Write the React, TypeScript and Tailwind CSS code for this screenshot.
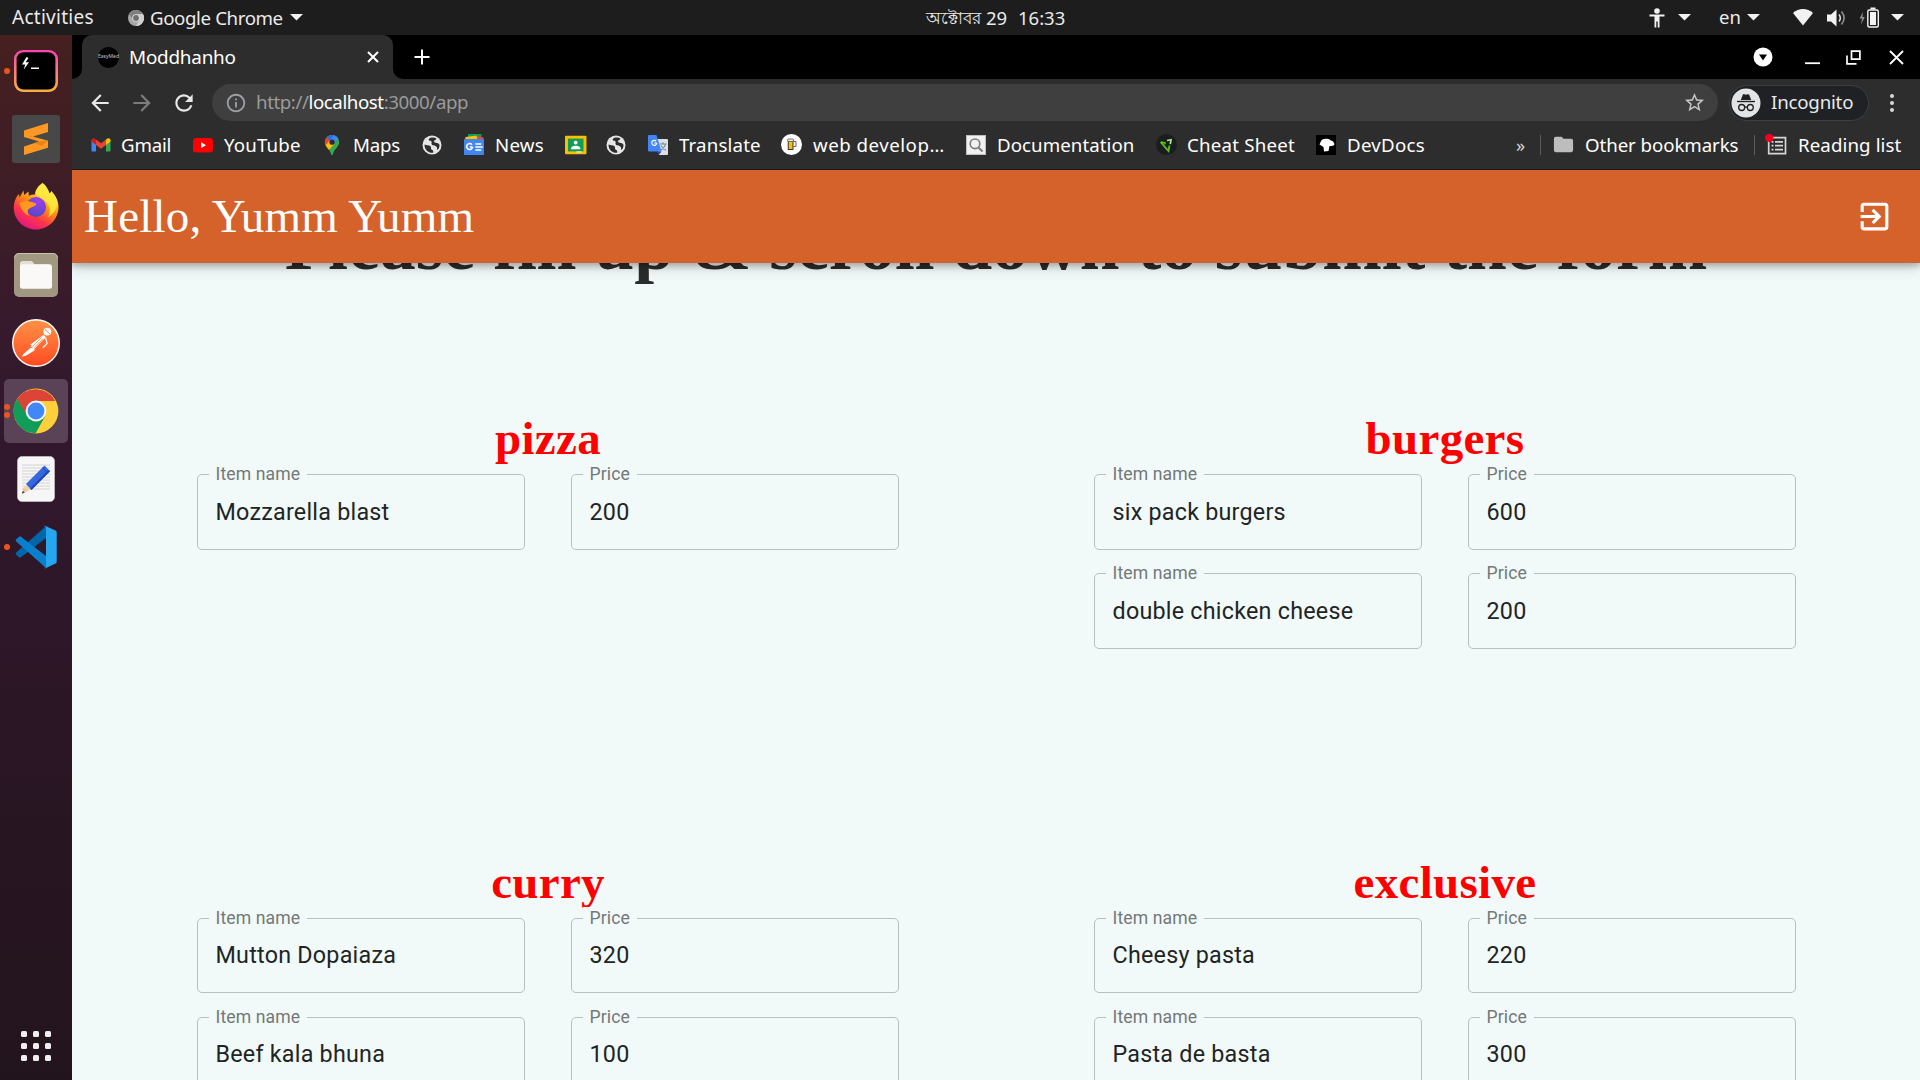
import type { ReactNode } from "react";
import {
  MdArrowBack,
  MdArrowForward,
  MdFolder,
  MdInfoOutline,
  MdRefresh,
  MdStarBorder,
} from "react-icons/md";

/* ---------- system top bar ---------- */

function Caret({ className }: { className: string }) {
  return (
    <svg className={`shrink-0 ${className}`} width="13" height="7" viewBox="0 0 13 7">
      <path d="M0 0h13L6.5 6.6z" fill="#f2f2f2" />
    </svg>
  );
}

function TopBar() {
  return (
    <div className="flex h-[35px] shrink-0 items-center bg-[#1d1d1d] text-[#ebebeb]">
      <span className="ml-[12px] w-[116px] pb-px text-[19px] leading-[33px] tracking-[0.260px]">Activities</span>
      <svg width="16" height="16" viewBox="0 0 16 16" className="shrink-0">
        <circle cx="8" cy="8" r="8" fill="#a8a8a8" />
        <path d="M1 4A8 8 0 0 1 15 4H8L4.5 9z" fill="#808080" />
        <path d="M15 4A8 8 0 0 1 8 16l3.500-6.200L10.500 4z" fill="#d0d0d0" />
        <circle cx="8" cy="8" r="3.800" fill="#ddd" />
        <circle cx="8" cy="8" r="2.900" fill="#6f6f6f" />
      </svg>
      <span className="ml-[6px] w-[140px] pb-px text-[18.700px] leading-[33px] tracking-[-0.400px]">Google Chrome</span>
      <Caret className="" />
      <span className="ml-[623px] w-[60px] text-[16.500px] leading-[35px]">অক্টোবর</span>
      <span className="w-[32px] text-[18.500px] leading-[35px]">29</span>
      <span className="w-[630px] text-[18.500px] leading-[35px]">16:33</span>
      <svg width="18" height="20" viewBox="0 0 18 20" className="shrink-0">
        <circle cx="9" cy="3" r="2.800" fill="#f2f2f2" />
        <path d="M1.500 6.500h15v2H11.500V19.500H9.700V13.500H8.300V19.500H6.500V8.500H1.500z" fill="#f2f2f2" />
      </svg>
      <Caret className="ml-[12px]" />
      <span className="ml-[28px] w-[28px] pb-px text-[18.500px] leading-[34px]">en</span>
      <Caret className="" />
      <svg width="20" height="17" viewBox="0 0 20 17" className="ml-[33px] shrink-0">
        <path d="M0 4C5.500-1.200 14.500-1.200 20 4L10 16.500z" fill="#f2f2f2" />
      </svg>
      <svg width="20" height="18" viewBox="0 0 20 18" className="ml-[14px] shrink-0">
        <path d="M0 5.500h4L9.500.5v17L4 12.500H0z" fill="#f2f2f2" />
        <path d="M12 5.500q2.600 3.500 0 7" fill="none" stroke="#d8d8d8" strokeWidth="1.600" />
        <path d="M14.500 2.500q5.200 6.500 0 13" fill="none" stroke="#8f8f8f" strokeWidth="1.600" />
      </svg>
      <svg width="21" height="21" viewBox="0 0 21 21" className="ml-[12px] shrink-0">
        <path d="M4 5L.5 11.500H3L2 17.500 5.800 10H3.500z" fill="#8d8d8d" />
        <rect x="8.800" y="3" width="10.500" height="17" rx="1.500" fill="none" stroke="#f2f2f2" strokeWidth="1.400" />
        <rect x="11" y="5" width="6" height="13" fill="#f2f2f2" />
        <rect x="11.500" y="0.500" width="5" height="2" fill="#f2f2f2" />
      </svg>
      <Caret className="ml-[11px]" />
    </div>
  );
}

/* ---------- dock ---------- */

function DockTile({ children, dots = 0, active = false }: { children: ReactNode; dots?: number; active?: boolean }) {
  return (
    <div className="relative flex w-[72px] justify-center">
      <div className={active ? "flex size-16 items-center justify-center rounded-[5px] bg-[#5a4356]" : "flex size-16 items-center justify-center"}>
        {children}
      </div>
      {dots > 0 && (
        <div className="absolute inset-y-0 left-1 flex flex-col justify-center gap-[2.500px]">
          {Array.from({ length: dots }, (_, i) => (
            <span key={i} className="size-[6px] rounded-full bg-[#e95420]" />
          ))}
        </div>
      )}
    </div>
  );
}

function TerminalIcon() {
  return (
    <svg width="48" height="48" viewBox="0 0 48 48">
      <defs>
        <linearGradient id="term" x1="0" y1="0" x2="0" y2="1">
          <stop offset="0" stopColor="#fb46b4" />
          <stop offset="1" stopColor="#fbb03f" />
        </linearGradient>
      </defs>
      <rect x="2" y="3" width="44" height="42" rx="9" fill="url(#term)" />
      <rect x="4.600" y="5.300" width="38.800" height="37.200" rx="7" fill="#000" />
      <path d="M14.500 10L10 17.500h3.200L11.800 22.500 17 15.200h-3.400L16.500 11z" fill="#fff" />
      <rect x="19" y="20.500" width="8" height="1.500" fill="#fff" />
    </svg>
  );
}

function SublimeIcon() {
  return (
    <svg width="48" height="48" viewBox="0 0 48 48">
      <rect width="48" height="48" rx="2.500" fill="#484848" />
      <path d="M12 15.500L36 8v9L21 21.500l15 4.200v7L12 40v-8.500l15-4.900-15-4.600z" fill="#ff9822" />
      <path d="M27 26.600l9-1-6 5.400-8-2.800z" fill="#e88512" />
    </svg>
  );
}

function FirefoxIcon() {
  return (
    <svg width="48" height="48" viewBox="0 0 48 48">
      <defs>
        <linearGradient id="ffx" x1="0.800" y1="0.100" x2="0.300" y2="1">
          <stop offset="0.100" stopColor="#fff44f" />
          <stop offset="0.400" stopColor="#ff980e" />
          <stop offset="0.700" stopColor="#ff3647" />
          <stop offset="1" stopColor="#e31587" />
        </linearGradient>
        <radialGradient id="ffp" cx="0.600" cy="0.200" r="0.900">
          <stop offset="0" stopColor="#a03df0" />
          <stop offset="1" stopColor="#4a4bbd" />
        </radialGradient>
      </defs>
      <path d="M30.500 0c4 3 5.500 6.500 7 10.500 1-.5 1.600-1.500 1.700-2.500C44 13 46.700 18 46.500 24.500 46 37 36 46.500 24 46.500S2 37 1.800 25C1.700 19 4 14 7 11l.6 3.500 3.800-7 .8 4.500 4.300-3.500.3 4.300c2-1 4-1.400 6.500-1.200C23 7 26.500 3 30.500 0z" fill="url(#ffx)" />
      <path d="M30.500 0c4 3 5.500 6.500 7 10.500 1-.5 1.600-1.500 1.700-2.500 4 4.300 6 8.500 6 14-1.500 6.500-5.500 10-9 12 3.500-7 1-14-5.500-18-4-2.200-7.500-4.500-7.400-5C23.500 6.500 26.500 3 30.500 0z" fill="#ffe93e" opacity="0.850" />
      <circle cx="24" cy="24" r="10" fill="url(#ffp)" />
      <path d="M7.500 20c5-2.500 10-2 15.500 0 1.500.5 1.500 1.800 0 2.800-2 1.400-4.500 1.600-6.500 3.500-1.600 1.500-1 4.500 1 6.500C12 31 9 26 7.500 20z" fill="#ff9a1f" />
    </svg>
  );
}

function FilesIcon() {
  return (
    <svg width="48" height="48" viewBox="0 0 48 48">
      <rect x="2" y="2" width="44" height="44" rx="5" fill="#a09881" />
      <path d="M2.500 7a4.500 4.500 0 0 1 4.500-4.500h34A4.500 4.500 0 0 1 45.500 7" fill="none" stroke="#c9c3b2" />
      <path d="M8 12.500A2.500 2.500 0 0 1 10.500 10H19q1.500 0 2.500 1.800L22.500 13.500H36V20H8z" fill="#e4dfd2" />
      <rect x="8" y="13.200" width="32" height="24.600" rx="2.500" fill="#faf9f8" />
    </svg>
  );
}

function PostmanIcon() {
  return (
    <svg width="48" height="48" viewBox="0 0 48 48">
      <defs>
        <linearGradient id="pm" x1="0" y1="0" x2="0" y2="1">
          <stop offset="0" stopColor="#ff9145" />
          <stop offset="1" stopColor="#ff4c23" />
        </linearGradient>
      </defs>
      <circle cx="24" cy="24" r="24" fill="#fff" />
      <circle cx="24" cy="24" r="22.600" fill="url(#pm)" />
      <circle cx="35.300" cy="12.600" r="3.900" fill="#fff" />
      <path d="M33 10.500l5 4.500" stroke="#ff7838" strokeWidth="0.900" />
      <path d="M31 16.200c1.500-.3 2.800.8 2.500 2.300L22 30.200l-2.200-.6 1-1.500-2.200-.2 1-1.700-1.500-.5z" fill="#fff" />
      <path d="M20.500 27.500l9-9M22 28.800l9-9" stroke="#ff7838" strokeWidth="0.800" />
      <path d="M19 28.500l4.200 2.500-9 5.500-4 1.200.7-2.200z" fill="#fff" />
      <path d="M33.600 18.500l1.500 6-4.300 4.300" fill="none" stroke="#fff" strokeWidth="1.200" />
    </svg>
  );
}

function ChromeIcon() {
  return (
    <svg width="48" height="48" viewBox="0 0 48 48">
      <circle cx="24" cy="24" r="22.400" fill="#fdd03b" />
      <path d="M4.600 12.800A22.400 22.400 0 0 1 43.400 14H24L14.500 29.500z" fill="#dc4437" />
      <path d="M5.200 12A22.400 22.400 0 0 0 23.500 46.400L33 29.500 14.800 28.500z" fill="#119d57" />
      <circle cx="24" cy="24" r="10.400" fill="#f4f6fa" />
      <circle cx="24" cy="24" r="8.400" fill="#4187f5" />
    </svg>
  );
}

function EditorIcon() {
  return (
    <svg width="48" height="48" viewBox="0 0 48 48">
      <rect x="5.500" y="1.500" width="37" height="45" rx="4.500" fill="#f6f6f6" stroke="#d5d0d3" strokeWidth="0.600" />
      <path d="M10 10h28M10 13h28M10 16h28M10 19h28M10 22h28M10 25h28M10 28h28M10 31h28M10 34h28" stroke="#cbcbcb" strokeWidth="0.800" />
      <path d="M11.500 32.500l4.500-2.500 4 4-7.500 3.500z" fill="#f5ceab" />
      <path d="M10 38.500l1.500-6 4 3.500z" fill="#ecc49f" />
      <path d="M10 38.800l.8-2.900 2 1.700z" fill="#333" />
      <path d="M14 29L32.500 10.500l5.500 5.800L19.500 35z" fill="#3567e0" />
      <path d="M18 33.500L36.500 14.800 38 16.300 19.500 35z" fill="#1f48b0" />
      <path d="M30.500 12.500l5.300 5.800" stroke="#1f48b0" />
    </svg>
  );
}

function CodeIcon() {
  return (
    <svg width="48" height="48" viewBox="0 0 48 48">
      <path d="M34 3L4.200 29.500a1.500 1.500 0 0 0 0 2.200L7 34.300a1.500 1.500 0 0 0 2 0L34 15z" fill="#0065a9" />
      <path d="M34 45L4.200 18.500a1.500 1.500 0 0 1 0-2.200L7 13.700a1.500 1.500 0 0 1 2 0L34 33z" fill="#0a80cc" />
      <path d="M33.500 3l10 4.500c.8.400 1.200 1 1.200 1.800v29.400c0 .8-.4 1.500-1.200 1.800l-10 4.700c-1 .3-1.500 0-2-.6 1.200.8 2.500.2 2.500-1.200V4.700c0-1.400-1.500-2-2.500-1.200.5-.6 1-.8 2-.5z" fill="#27a6f0" />
    </svg>
  );
}

function Dock() {
  return (
    <div className="flex w-[72px] shrink-0 flex-col gap-1 bg-linear-to-b from-[#46201f] via-[#33182e] via-35% to-[#22141c] pt-1">
      <DockTile dots={1}><TerminalIcon /></DockTile>
      <DockTile><SublimeIcon /></DockTile>
      <DockTile><FirefoxIcon /></DockTile>
      <DockTile><FilesIcon /></DockTile>
      <DockTile><PostmanIcon /></DockTile>
      <DockTile dots={2} active><ChromeIcon /></DockTile>
      <DockTile><EditorIcon /></DockTile>
      <DockTile dots={1}><CodeIcon /></DockTile>
      <div className="mt-auto mb-[19px] grid grid-cols-3 gap-[6px] self-center">
        {Array.from({ length: 9 }, (_, i) => (
          <span key={i} className="size-[6px] rounded-[1.500px] bg-[#f0eeee]" />
        ))}
      </div>
    </div>
  );
}

/* ---------- browser chrome ---------- */

function TabStrip() {
  return (
    <div className="flex h-[44px] items-center bg-black">
      <svg width="10" height="10" viewBox="0 0 10 10" className="shrink-0 self-end">
        <path d="M10 0v10H0A10 10 0 0 0 10 0z" fill="#2d2d2d" />
      </svg>
      <div className="flex h-full w-[311px] shrink-0 items-center rounded-t-[10px] bg-[#2d2d2d] pl-4">
        <span className="flex size-[21px] shrink-0 items-center justify-center rounded-full bg-black text-[5px] text-[#c8c8c8]">EasyMed</span>
        <span className="ml-[10px] w-[238px] text-[18.900px] leading-[44px] tracking-[-0.240px] text-white">Moddhanho</span>
        <svg width="12" height="12" viewBox="0 0 12 12" className="shrink-0">
          <path d="M1 1l10 10M11 1L1 11" stroke="#fff" strokeWidth="2" />
        </svg>
      </div>
      <svg width="10" height="10" viewBox="0 0 10 10" className="shrink-0 self-end">
        <path d="M0 0v10h10A10 10 0 0 1 0 0z" fill="#2d2d2d" />
      </svg>
      <svg width="16" height="16" viewBox="0 0 16 16" className="ml-[11px] shrink-0">
        <path d="M8 .5v15M.5 8h15" stroke="#fff" strokeWidth="2" />
      </svg>
      <svg width="20" height="20" viewBox="0 0 20 20" className="ml-auto shrink-0">
        <circle cx="10" cy="10" r="9.500" fill="#fff" />
        <path d="M6 7.500h8L10 13.500z" fill="#000" />
      </svg>
      <svg width="15" height="15" viewBox="0 0 15 15" className="ml-[32px] shrink-0">
        <path d="M0 13.200h15" stroke="#fff" strokeWidth="1.800" />
      </svg>
      <svg width="15" height="15" viewBox="0 0 15 15" className="ml-[26px] shrink-0">
        <path d="M5.500 1.200h8.400v8H5.500zM1 5.500v8.300h9.500" fill="none" stroke="#fff" strokeWidth="1.700" />
      </svg>
      <svg width="15" height="15" viewBox="0 0 15 15" className="ml-[28px] mr-[16px] shrink-0">
        <path d="M1 1l13 13M14 1L1 14" stroke="#fff" strokeWidth="1.800" />
      </svg>
    </div>
  );
}

function Toolbar() {
  return (
    <div className="flex h-[47px] items-center bg-[#2d2d2d]">
      <MdArrowBack className="ml-[15px] size-[26px] shrink-0 text-[#e8e8e8]" />
      <MdArrowForward className="ml-[16px] size-[26px] shrink-0 text-[#7d7d7d]" />
      <MdRefresh className="ml-[16px] size-[26px] shrink-0 text-[#e8e8e8]" />
      <div className="ml-[15px] flex h-[37px] w-[1506px] shrink-0 items-center rounded-full bg-[#3f3f3f]">
        <MdInfoOutline className="ml-[13px] size-[22px] shrink-0 text-[#9aa0a6]" />
        <span className="ml-[9px] flex-1 pb-px text-[18.700px] leading-[36px] tracking-[-0.420px] text-[#9b9b9b]">
          http://<span className="text-white">localhost</span>:3000/app
        </span>
        <MdStarBorder className="mr-[12px] size-[23px] shrink-0 text-[#c4c4c4]" />
      </div>
      <div className="ml-[10.500px] flex h-[36px] w-[140px] shrink-0 items-center rounded-full border border-[#3d4043] bg-[#202124]">
        <svg width="30" height="30" viewBox="0 0 30 30" className="ml-[1px] shrink-0">
          <circle cx="15" cy="15" r="14.500" fill="#e3e4e6" />
          <path d="M9.800 12l2-5.200c.3-.7 1-.8 1.500-.6l1.700.5 1.700-.5c.6-.2 1.200 0 1.500.6l2 5.200z" fill="#202124" />
          <path d="M6 13.500h18" stroke="#202124" strokeWidth="1.400" />
          <circle cx="10.700" cy="19.500" r="3" fill="none" stroke="#202124" strokeWidth="1.300" />
          <circle cx="19.300" cy="19.500" r="3" fill="none" stroke="#202124" strokeWidth="1.300" />
          <path d="M13.500 19.500q1.500-1.200 3 0" fill="none" stroke="#202124" strokeWidth="1.200" />
        </svg>
        <span className="ml-[10.500px] pb-[2px] text-[18.700px] leading-[32px] tracking-[-0.200px] text-[#e8eaed]">Incognito</span>
      </div>
      <div className="ml-[21px] flex flex-col gap-[3px]">
        <span className="size-[4px] rounded-full bg-[#d8d8d8]" />
        <span className="size-[4px] rounded-full bg-[#d8d8d8]" />
        <span className="size-[4px] rounded-full bg-[#d8d8d8]" />
      </div>
    </div>
  );
}

function Globe() {
  return (
    <svg width="20" height="20" viewBox="0 0 20 20" className="ml-px">
      <circle cx="10" cy="10" r="9.500" fill="#e6e6e6" />
      <path d="M2.500 9.500c2 .8 4.300.4 5.800 1.500 1.200.9.200 2.500 1.200 3.500.8.800 1.700.7 1.700 1.700v1.600c-4.700.6-8.900-3.300-8.700-8.300z" fill="#2d2d2d" />
      <path d="M8.500 2.800c2-.7 4.600-.2 6 1-.2 1.500-2.200 1.300-2.600 2.500-.2.900 1 1.200 2 1.400 1.700.4 3.500.5 3.600 2.600.1 1.700-.9 3.700-2 4.800-.9-.9.200-2.700-1.300-3.700-1.400-1-3.500-.2-4.400-1.800-.8-1.500.4-2.400-.5-3.300-.9-1-2.300-.3-2.600-1.300-.2-.9 1-1.900 1.800-2.200z" fill="#2d2d2d" />
    </svg>
  );
}

function Gmail() {
  return (
    <svg width="20" height="20" viewBox="0 0 20 20">
      <path d="M.5 5v10.500c0 .6.400 1 1 1H5V8.500z" fill="#4285f4" />
      <path d="M19.500 5v10.500c0 .6-.4 1-1 1H15V8.500z" fill="#34a853" />
      <path d="M15 4.500l1.400-1c1.300-.9 3.100 0 3.100 1.600V6.500L15 10z" fill="#fbbc04" />
      <path d="M.5 6.500V5.100c0-1.600 1.800-2.500 3.100-1.600l1.400 1V10z" fill="#c5221f" />
      <path d="M5 4.500l5 3.800 5-3.800V10l-5 3.800L5 10z" fill="#ea4335" />
    </svg>
  );
}

function YouTube() {
  return (
    <svg width="20" height="20" viewBox="0 0 20 20">
      <rect x="0" y="3" width="20" height="14.500" rx="3.200" fill="#f00" />
      <path d="M8.200 7.300v5.800l4.900-2.900z" fill="#fff" />
    </svg>
  );
}

function MapsPin() {
  return (
    <svg width="20" height="20" viewBox="0 0 20 20">
      <defs>
        <clipPath id="pin">
          <path d="M10 0a7.200 7.200 0 0 0-7.200 7.200c0 4.600 5 6.500 6.300 11.800.2 1 .5 1.200.9 1.200s.7-.2.900-1.200c1.300-5.300 6.300-7.200 6.300-11.800A7.200 7.200 0 0 0 10 0z" />
        </clipPath>
      </defs>
      <g clipPath="url(#pin)">
        <path d="M0 0h20v20H0z" fill="#34a853" />
        <path d="M0 0h14L5 11 0 6z" fill="#ea4335" />
        <path d="M4.500 2.500L8 5.500 15 -3 5 -2z" fill="#1a73e8" />
        <path d="M12.500 -1L7.600 5.600 12 8.500 17.500 2z" fill="#4285f4" />
        <path d="M2 12L7.500 5.500 12.500 9 6 16z" fill="#fbbc04" />
      </g>
      <circle cx="10" cy="7.200" r="2.600" fill="#2d2d2d" />
    </svg>
  );
}

function News() {
  return (
    <svg width="20" height="21" viewBox="0 0 20 21">
      <path d="M4 0h13.500v5H4z" fill="#0c9d58" />
      <path d="M1.500 3l11-1.500 2 5H1z" fill="#ffc107" />
      <path d="M13 2.500l6.500.8-.5 3h-6z" fill="#f44336" />
      <rect x="0" y="5" width="20" height="16" rx="0.800" fill="#4285f4" />
      <path d="M8.700 13H5.800M8 10.700a3 3 0 1 0 .6 2.300" fill="none" stroke="#fff" strokeWidth="1.600" />
      <path d="M11.300 10h6M11.300 13h7.500M11.300 16h6" stroke="#fff" strokeWidth="1.500" />
    </svg>
  );
}

function Classroom() {
  return (
    <svg width="22" height="20" viewBox="0 0 22 20">
      <rect x="0" y="0.800" width="21.500" height="18.400" rx="1" fill="#fbbc05" />
      <rect x="3" y="3.600" width="15.500" height="12.800" fill="#0f9d58" />
      <circle cx="10.700" cy="7.600" r="1.900" fill="#fff" />
      <path d="M6 14.200c0-2.700 2.500-3.400 4.700-3.400s4.700.7 4.700 3.400z" fill="#fff" />
      <rect x="11.500" y="16.400" width="5" height="1.200" fill="#f1f1f1" />
    </svg>
  );
}

function Translate() {
  return (
    <svg width="20" height="20" viewBox="0 0 20 20">
      <path d="M7 4h12a1 1 0 0 1 1 1v14a1 1 0 0 1-1 1h-8z" fill="#dcdfe3" />
      <path d="M11.500 9h7M15 7.300V9M17.500 9c-.6 3-2.600 4.800-4.500 6M13 10.500c1 2 2.700 3.800 5 4.700" fill="none" stroke="#6d8fa0" strokeWidth="1.100" />
      <path d="M1 0h7.500l5 16.500H1a1 1 0 0 1-1-1V1a1 1 0 0 1 1-1z" fill="#4285f4" />
      <path d="M8.500 16.500h5L10.800 20z" fill="#3a3fa8" />
      <path d="M8.800 8H6.300M8.200 6.200A2.500 2.500 0 1 0 8.800 8" fill="none" stroke="#fff" strokeWidth="1.200" />
    </svg>
  );
}

function Beer() {
  return (
    <svg width="21" height="21" viewBox="0 0 21 21">
      <circle cx="10.500" cy="10.500" r="10.500" fill="#fff" />
      <path d="M12.500 7.500h2.500v5H12.500" fill="none" stroke="#666" strokeWidth="1" />
      <rect x="7.200" y="6.500" width="4.800" height="9" fill="#f5bf1b" stroke="#222" strokeWidth="0.900" />
      <rect x="6.700" y="5" width="5.800" height="2.400" rx="1" fill="#fff" stroke="#444" strokeWidth="0.800" />
    </svg>
  );
}

function SearchDoc() {
  return (
    <svg width="20" height="20" viewBox="0 0 20 20">
      <rect x="0.500" y="0.500" width="19" height="19" fill="#f1f1f1" stroke="#bdbdbd" />
      <circle cx="9" cy="8.800" r="4.800" fill="none" stroke="#7c7c7c" strokeWidth="1.600" />
      <path d="M12.500 12.500l4 4" stroke="#7c7c7c" strokeWidth="2" />
    </svg>
  );
}

function EmmetMark() {
  return (
    <svg width="21" height="21" viewBox="0 0 21 21">
      <circle cx="10.500" cy="10.500" r="10.500" fill="#1a1d1e" />
      <path d="M4.500 8L12.500 17 13.500 11.500M5 8.200l4.800 1" fill="none" stroke="#5cc415" strokeWidth="1.800" />
      <path d="M6.500 11l3.500-1.500" stroke="#3f9c12" strokeWidth="1.200" />
      <path d="M11 6.500l4-.8-.7 4.500" fill="none" stroke="#a9ee8a" strokeWidth="1.700" />
    </svg>
  );
}

function DevDocsMark() {
  return (
    <svg width="20" height="20" viewBox="0 0 20 20">
      <rect width="20" height="20" fill="#000" />
      <path d="M5 6c1.500-2.600 7-2.800 9.500-.8 2 .3 3.500 2 4 4-.8 1.700-3.300 2-5 1.800L12.500 16 8 16.500 7.500 12 3.500 9.500z" fill="#fff" />
    </svg>
  );
}

function Bookmark({ icon, label, className, text = "" }: { icon: ReactNode; label?: string; className: string; text?: string }) {
  return (
    <div className={`flex shrink-0 items-center ${className}`}>
      <span className="flex w-[31px] shrink-0 items-center">{icon}</span>
      {label && <span className={`text-[18.700px] leading-[43px] whitespace-nowrap text-white ${text}`}>{label}</span>}
    </div>
  );
}

function BookmarksBar() {
  return (
    <div className="flex h-[44px] items-center border-b border-[#1b1b1b] bg-[#2d2d2d] pr-[18px] pb-[6px] pl-[19px]">
      <Bookmark icon={<Gmail />} label="Gmail" className="w-[102px]" text="-ml-px tracking-[-0.200px]" />
      <Bookmark icon={<YouTube />} label="YouTube" className="w-[129px]" text="tracking-[0.150px]" />
      <Bookmark icon={<MapsPin />} label="Maps" className="w-[99px]" text="tracking-[-0.200px]" />
      <Bookmark icon={<Globe />} className="w-[43px]" />
      <Bookmark icon={<News />} label="News" className="w-[101px]" text="tracking-[0.200px]" />
      <Bookmark icon={<Classroom />} className="w-[40px]" />
      <Bookmark icon={<Globe />} className="w-[43px]" />
      <Bookmark icon={<Translate />} label="Translate" className="w-[133px]" text="tracking-[0.150px]" />
      <Bookmark icon={<Beer />} label="web develop…" className="w-[185px]" text="ml-px tracking-[0.500px]" />
      <Bookmark icon={<SearchDoc />} label="Documentation" className="w-[190px]" text="tracking-[0.060px]" />
      <Bookmark icon={<EmmetMark />} label="Cheat Sheet" className="w-[160px]" text="tracking-[0.220px]" />
      <Bookmark icon={<DevDocsMark />} label="DevDocs" className="w-[199px]" text="tracking-[0.250px]" />
      <span className="ml-px w-[24px] text-[18px] leading-[38px] text-[#d8d8d8]">»</span>
      <span className="h-[20px] w-px bg-[#5c5c5c]" />
      <MdFolder className="ml-[11px] size-[23px] shrink-0 text-[#bdbdbd]" />
      <span className="ml-[10px] w-[169px] text-[18.700px] leading-[43px] tracking-[-0.080px] whitespace-nowrap text-white">Other bookmarks</span>
      <span className="h-[20px] w-px bg-[#5c5c5c]" />
      <svg width="22" height="22" viewBox="0 0 22 22" className="ml-[10px] shrink-0">
        <path d="M3.700 3.700h16.800v16H3.700z" fill="none" stroke="#d5d5d5" strokeWidth="1.700" />
        <path d="M6.500 7.800h2M10 7.800h8M6.500 11.700h2M10 11.700h8M6.500 15.600h2M10 15.600h8" stroke="#d5d5d5" strokeWidth="1.700" />
        <circle cx="4.300" cy="4" r="4.100" fill="#f4001f" />
      </svg>
      <span className="ml-[11px] text-[18.700px] leading-[43px] tracking-[0.100px] whitespace-nowrap text-white">Reading list</span>
    </div>
  );
}

/* ---------- page ---------- */

type Item = { name: string; price: string };

function Field({ label, value, tall }: { label: string; value: string; tall: boolean }) {
  return (
    <div className={`relative flex w-[328px] items-center rounded-[5px] border border-[#b9bfbf] pl-[17.500px] ${tall ? "h-[76px]" : "h-[75px] pb-px"}`}>
      <span className="absolute -top-[12px] left-[11px] bg-[#f1faf9] pr-[7px] pl-[6.500px] text-[17.600px] leading-[22px] tracking-[0.100px] whitespace-nowrap text-[#737878]">
        {label}
      </span>
      <span className="text-[23.300px] leading-[34px] tracking-[0.240px] whitespace-nowrap text-[#212424]">{value}</span>
    </div>
  );
}

function Category({ title, items, tall = false }: { title: string; items: Item[]; tall?: boolean }) {
  return (
    <section className="w-[702px]">
      <h3 className="mb-2 text-center font-['Liberation_Serif',serif] text-[47px] leading-[56px] font-bold tracking-[0.300px] text-[#ff0000]">{title}</h3>
      <div className={tall ? "flex flex-col gap-[23px]" : "flex flex-col gap-[24px]"}>
        {items.map((item) => (
          <div key={item.name} className="flex justify-between">
            <Field label="Item name" value={item.name} tall={tall} />
            <Field label="Price" value={item.price} tall={tall} />
          </div>
        ))}
      </div>
    </section>
  );
}

function Page() {
  return (
    <main className="min-h-0 flex-1 overflow-hidden bg-[#f1faf9] font-[Roboto,sans-serif]">
      <header className="relative z-10 flex h-[93px] items-center justify-between bg-[#d5622b] pr-[27px] pl-[12px] text-white shadow-[0_3px_6px_rgba(0,0,0,0.24),0_5px_14px_rgba(0,0,0,0.14)]">
        <span className="font-['Liberation_Serif',serif] text-[47px] leading-[93px] tracking-[0.220px]">Hello, Yumm Yumm</span>
        <svg width="37" height="37" viewBox="0 0 24 24" fill="#fff">
          <path d="M10.090 15.590L11.500 17l5-5-5-5-1.410 1.410L12.670 11H3v2h9.670l-2.580 2.590zM19 3H5c-1.110 0-2 .9-2 2v4h2V5h14v14H5v-4H3v4c0 1.100.890 2 2 2h14c1.100 0 2-.9 2-2V5c0-1.100-.9-2-2-2z" />
        </svg>
      </header>
      <h1 className="-mt-[58px] text-center font-['Liberation_Serif',serif] text-[71.500px] leading-[80px] font-bold whitespace-nowrap text-[#2b2d2d]">
        Please fill up &amp; scroll down to submit the form
      </h1>
      <div className="mt-[125px] ml-[125px] grid w-[1599px] auto-rows-[444px] grid-cols-[702px_702px] justify-between">
        <Category tall title="pizza" items={[{ name: "Mozzarella blast", price: "200" }]} />
        <Category
          tall
          title="burgers"
          items={[
            { name: "six pack burgers", price: "600" },
            { name: "double chicken cheese", price: "200" },
          ]}
        />
        <Category
          title="curry"
          items={[
            { name: "Mutton Dopaiaza", price: "320" },
            { name: "Beef kala bhuna", price: "100" },
          ]}
        />
        <Category
          title="exclusive"
          items={[
            { name: "Cheesy pasta", price: "220" },
            { name: "Pasta de basta", price: "300" },
          ]}
        />
      </div>
    </main>
  );
}

export default function App() {
  return (
    <div className="flex h-[1080px] w-[1920px] flex-col overflow-hidden font-['Noto_Sans',sans-serif]">
      <TopBar />
      <div className="flex min-h-0 flex-1">
        <Dock />
        <div className="flex min-w-0 flex-1 flex-col">
          <TabStrip />
          <Toolbar />
          <BookmarksBar />
          <Page />
        </div>
      </div>
    </div>
  );
}
